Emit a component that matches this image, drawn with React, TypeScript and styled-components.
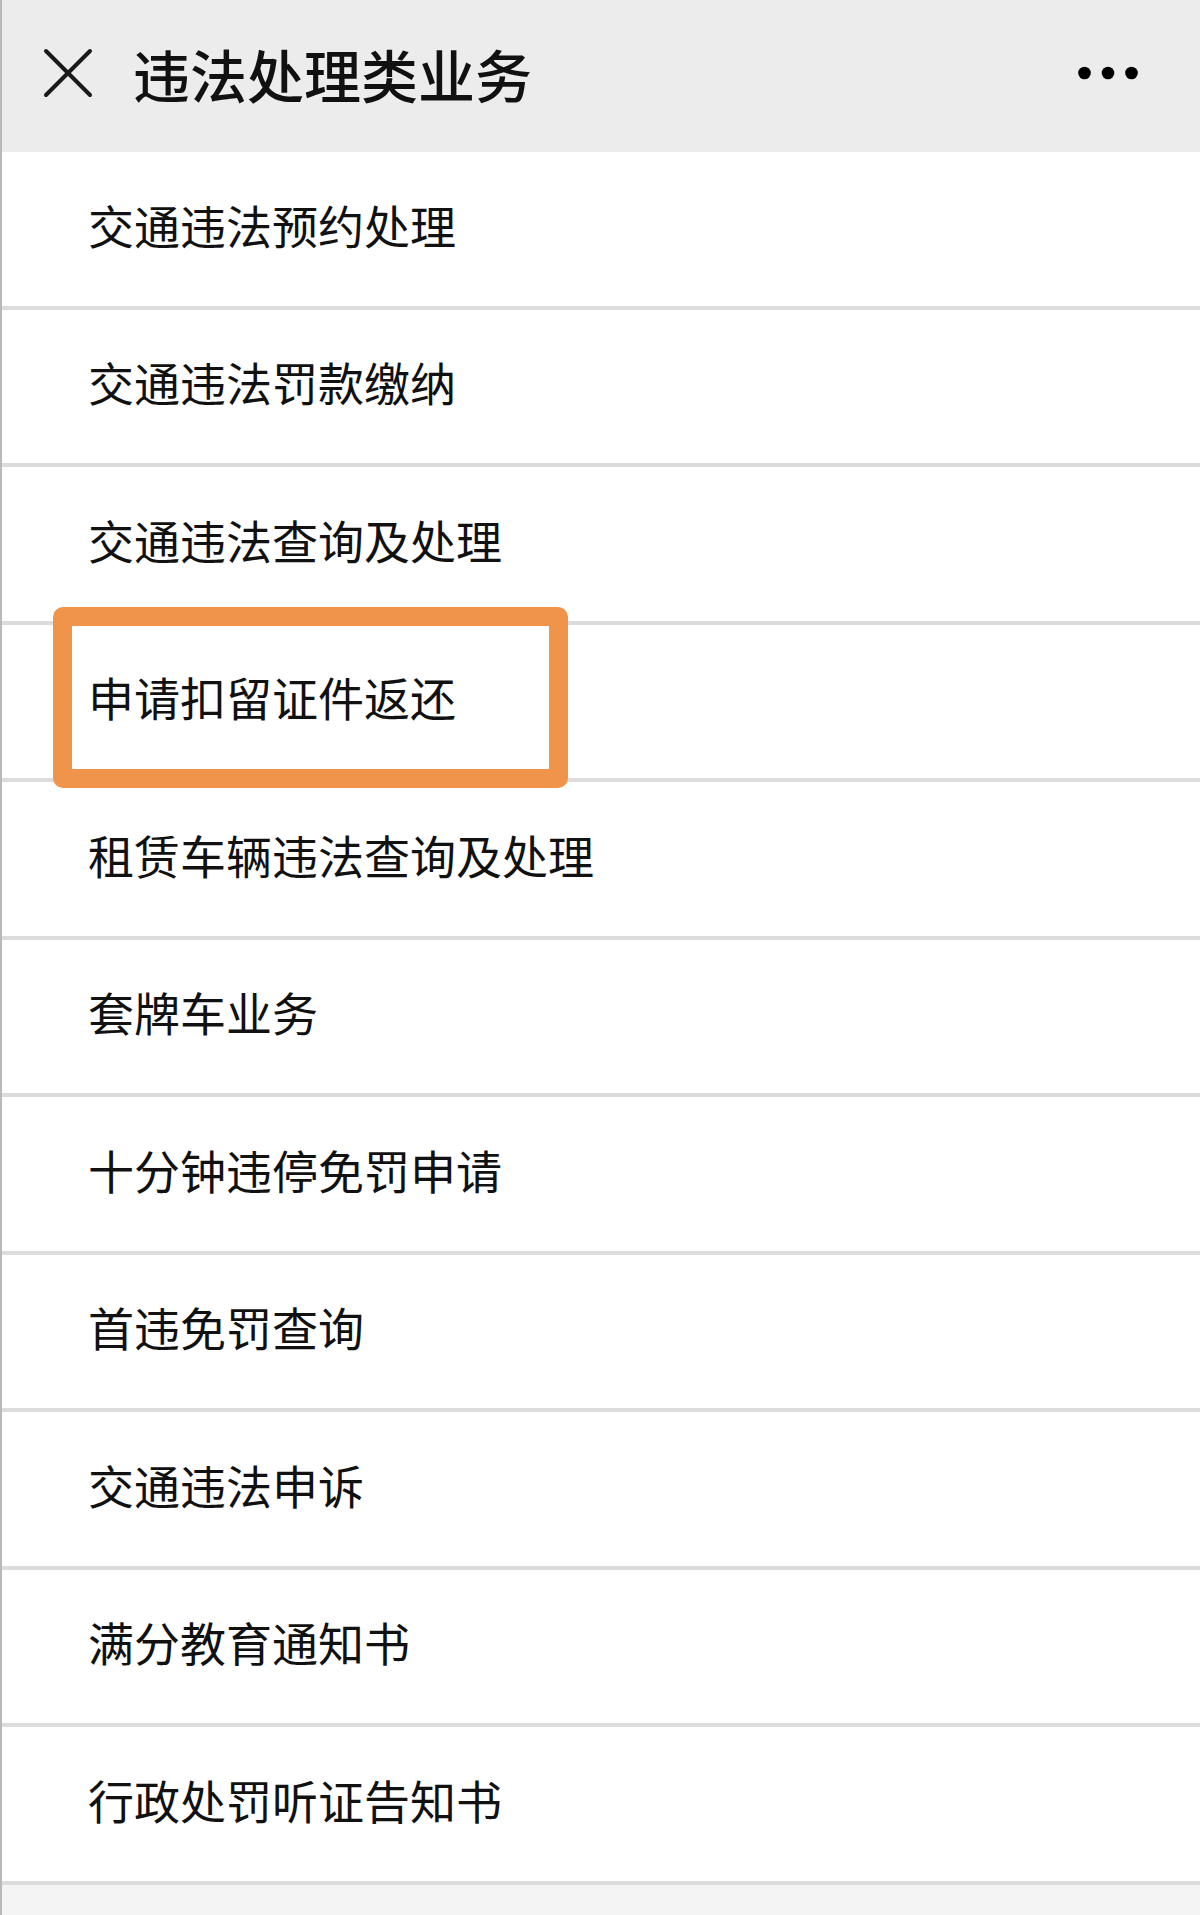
import styled, { createGlobalStyle } from 'styled-components';

const GlobalStyle = createGlobalStyle`
  * {
    box-sizing: border-box;
  }

  body {
    margin: 0;
    background: #f4f4f4;
    font-family: "Noto Sans CJK SC", "Noto Sans", sans-serif;
    color: #111;
  }

  ul {
    margin: 0;
    padding: 0;
    list-style: none;
  }
`;

const Page = styled.div`
  display: flex;
  flex-direction: column;
  min-height: 1915px;
  border-left: 2px solid #b9b9b9;
  background: #f4f4f4;
`;

const Header = styled.header`
  display: flex;
  align-items: center;
  height: 152px;
  padding: 0 62px 6px 41px;
  background: #ececec;
`;

const CloseButton = styled.button`
  display: flex;
  padding: 0;
  border: none;
  background: none;
  color: #1a1a1a;
`;

const Title = styled.h1`
  flex: 1;
  margin: 0 0 0 40px;
  font-size: 57px;
  font-weight: 500;
  line-height: 1;
`;

const MoreButton = styled.button`
  display: flex;
  padding: 0;
  border: none;
  background: none;
  color: #000;
`;

const MenuList = styled.ul``;

const MenuItem = styled.li`
  position: relative;
  display: flex;
  align-items: center;
  height: 157.5px;
  padding: 0 0 10px 86px;
  border-bottom: 4px solid #dcdcdc;
  background: #fff;
  font-size: 46px;
  line-height: 1;
`;

const Highlight = styled.span`
  position: absolute;
  z-index: 1;
  left: 50.5px;
  top: -17.5px;
  width: 515px;
  height: 181px;
  border: 19px solid #f0934b;
  border-radius: 10px;
  pointer-events: none;
`;

interface MenuEntry {
  label: string;
  highlighted?: boolean;
}

const entries: MenuEntry[] = [
  { label: '交通违法预约处理' },
  { label: '交通违法罚款缴纳' },
  { label: '交通违法查询及处理' },
  { label: '申请扣留证件返还', highlighted: true },
  { label: '租赁车辆违法查询及处理' },
  { label: '套牌车业务' },
  { label: '十分钟违停免罚申请' },
  { label: '首违免罚查询' },
  { label: '交通违法申诉' },
  { label: '满分教育通知书' },
  { label: '行政处罚听证告知书' },
];

const App = () => {
  return (
    <Page>
      <GlobalStyle />
      <Header>
        <CloseButton aria-label="关闭">
          <svg width="50" height="50" viewBox="0 0 50 50">
            <path d="M3 3 L47 47 M47 3 L3 47" stroke="currentColor" strokeWidth="4" strokeLinecap="round" />
          </svg>
        </CloseButton>
        <Title>违法处理类业务</Title>
        <MoreButton aria-label="更多">
          <svg width="60" height="14" viewBox="0 0 60 14">
            <circle cx="6.5" cy="7" r="6.3" fill="currentColor" />
            <circle cx="30" cy="7" r="6.3" fill="currentColor" />
            <circle cx="53.5" cy="7" r="6.3" fill="currentColor" />
          </svg>
        </MoreButton>
      </Header>
      <MenuList>
        {entries.map((entry) => (
          <MenuItem key={entry.label}>
            {entry.label}
            {entry.highlighted && <Highlight />}
          </MenuItem>
        ))}
      </MenuList>
    </Page>
  );
};

export default App;
